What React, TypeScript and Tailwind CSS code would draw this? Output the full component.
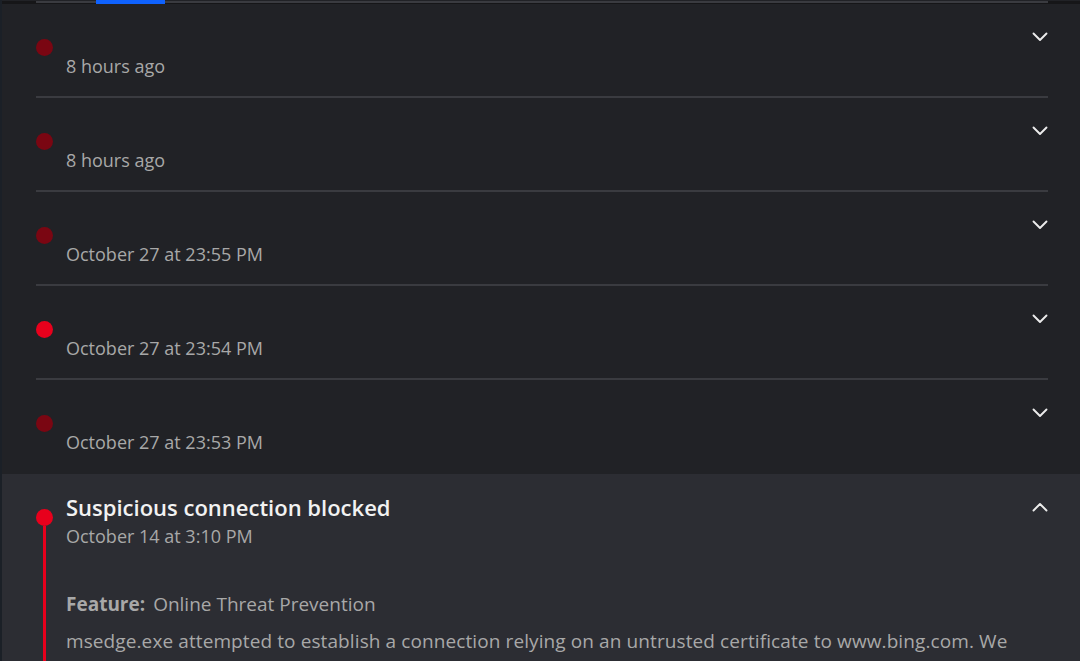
import React from "react";

const rows = [
  { time: "8 hours ago", dot: "bg-[#7a0612]" },
  { time: "8 hours ago", dot: "bg-[#7a0612]" },
  { time: "October 27 at 23:55 PM", dot: "bg-[#7a0612]" },
  { time: "October 27 at 23:54 PM", dot: "bg-[#e8001c]" },
  { time: "October 27 at 23:53 PM", dot: "bg-[#7a0612]" },
];

function Chevron({ up }: { up?: boolean }) {
  return (
    <svg width="16" height="10" viewBox="0 0 16 10" fill="none" className="text-[#ececec]">
      <path
        d={up ? "M1.5 8.5 L8 2 L14.5 8.5" : "M1.5 1.5 L8 8 L14.5 1.5"}
        stroke="currentColor"
        strokeWidth="1.9"
        strokeLinecap="round"
        strokeLinejoin="round"
      />
    </svg>
  );
}

function Row({ time, dot, last }: { time: string; dot: string; last?: boolean }) {
  return (
    <div className={`ml-[34px] mr-[32px] flex h-[94px] ${last ? "" : "border-b-2 border-[#3a3b40]"}`}>
      <div className="w-[30px] shrink-0">
        <div className={`mt-[35px] h-[17px] w-[17px] rounded-full ${dot}`} />
      </div>
      <div className="flex flex-1 flex-col pt-[19px]">
        <div className="h-[28px]" />
        <div className="mt-[3px] text-[18px] leading-[24px] text-[#a8a8a8]">{time}</div>
      </div>
      <div className="w-[16px] shrink-0 pt-[28px]">
        <Chevron />
      </div>
    </div>
  );
}

export default function App() {
  return (
    <div
      className="h-[661px] w-[1080px] overflow-hidden border-l-2 border-[#1b2027] bg-[#212226]"
      style={{ fontFamily: '"Open Sans", "Noto Sans", sans-serif' }}
    >
      {/* tab strip */}
      <div className="h-[3px] bg-[#161618]">
        <div className="relative ml-[34px] mr-[32px] mt-[1px] h-[2px] bg-[#3a3b40]">
          <div className="absolute left-[60px] top-[-1px] h-[4px] w-[69px] bg-[#0f62fe]" />
        </div>
      </div>

      {rows.map((r, i) => (
        <Row key={i} time={r.time} dot={r.dot} last={i === rows.length - 1} />
      ))}

      {/* expanded item */}
      <div className="h-[200px] bg-[#2c2d33]">
        <div className="ml-[34px] mr-[32px] flex h-full">
          <div className="flex w-[30px] shrink-0 flex-col">
            <div className="mt-[35px] h-[17px] w-[17px] shrink-0 rounded-full bg-[#e8001c]" />
            <div className="ml-[7px] w-[3px] flex-1 bg-[#e8001c]" />
          </div>
          <div className="flex flex-1 flex-col pt-[19px]">
            <div className="text-[22px] font-semibold leading-[28px] text-[#f2f2f2]">
              Suspicious connection blocked
            </div>
            <div className="mt-[3px] text-[18px] leading-[24px] text-[#a8a8a8]">October 14 at 3:10 PM</div>
            <div className="mt-[44px] text-[19px] leading-[24px] text-[#a8a8a8]">
              <span className="font-bold">Feature:</span>
              <span className="ml-[8px]">Online Threat Prevention</span>
            </div>
            <div className="mt-[11px] text-[19px] leading-[28px] tracking-[0.1px] text-[#a8a8a8]">
              msedge.exe attempted to establish a connection relying on an untrusted certificate to www.bing.com. We
              blocked the connection to protect you because the certificate could not be verified by a trusted
              authority.
            </div>
          </div>
          <div className="w-[16px] shrink-0 pt-[28px]">
            <Chevron up />
          </div>
        </div>
      </div>
    </div>
  );
}
